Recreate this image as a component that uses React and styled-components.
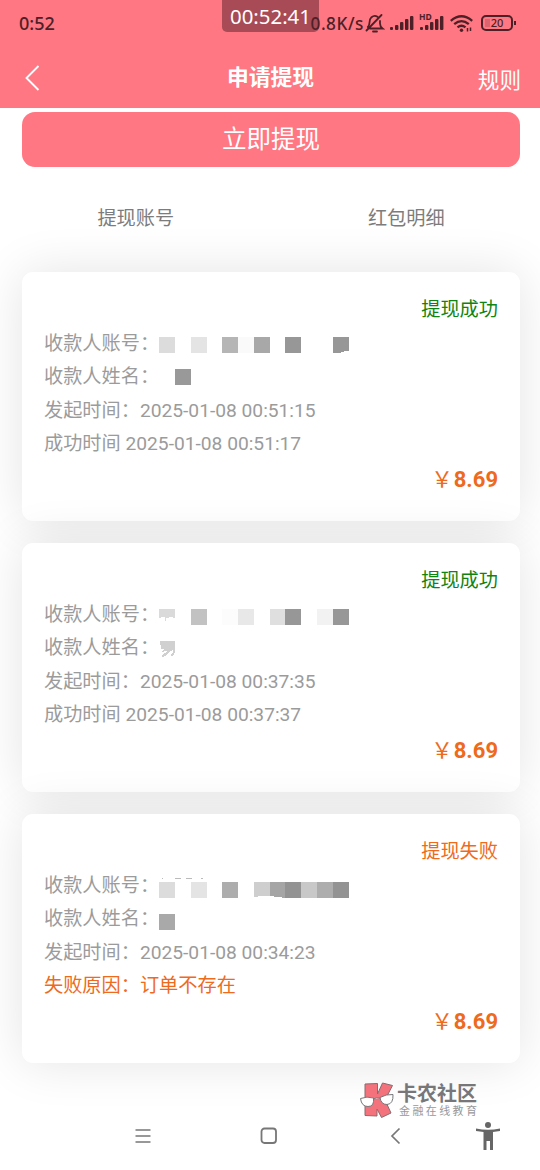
import React from 'react';
import styled, { createGlobalStyle } from 'styled-components';

const GlobalStyle = createGlobalStyle`
  :root {
    --primary-color: #ff7782;
    --status-color: #4d2027;
    --text-color: #9b9b9b;
    --success-color: #108410;
    --warn-color: #ee6a1c;
  }
  * {
    box-sizing: border-box;
  }
  body {
    margin: 0;
    background: #fff;
    font-family: Roboto, "Noto Sans CJK SC", sans-serif;
  }
`

const Page = styled.div`
  position: relative;
  display: flex;
  flex-direction: column;
  width: 540px;
  height: 1170px;
  overflow: hidden;
  background: #fff;
`

const Header = styled.header`
  position: relative;
  z-index: 1;
  flex: none;
  height: 108px;
  background: var(--primary-color);
`

const StatusBar = styled.div`
  display: flex;
  justify-content: space-between;
  align-items: center;
  height: 46px;
  padding: 0 27px 0 19px;
  color: var(--status-color);
  font-family: "Noto Sans", sans-serif;
  font-size: 18px;
  font-weight: 500;
`

const StatusIcons = styled.div`
  display: flex;
  align-items: center;
  svg {
    display: block;
  }
`

const Speed = styled.span`
  font-size: 17.2px;
  letter-spacing: 0.55px;
  margin-right: 3px;
`

const Timer = styled.div`
  position: absolute;
  top: 0;
  left: 222px;
  width: 97px;
  height: 32px;
  border-radius: 0 0 5px 5px;
  background: rgba(82, 32, 42, 0.5);
  color: #fff;
  font-family: "Noto Sans", sans-serif;
  font-size: 20.4px;
  line-height: 33px;
  text-align: center;
`

const TitleBar = styled.div`
  display: grid;
  grid-template-columns: 1fr auto 1fr;
  align-items: center;
  height: 62px;
  padding: 0 19px 0 22px;
  color: #fff;
  h1 {
    margin: 0;
    padding: 2px 2px 0 0;
    font-size: 21.8px;
    font-weight: 700;
    line-height: 30px;
  }
  svg {
    display: block;
  }
`

const Rules = styled.span`
  justify-self: end;
  font-size: 21.6px;
  line-height: 30px;
  padding-top: 7px;
`

const WithdrawButton = styled.button`
  flex: none;
  height: 55px;
  margin: 4px 20px 0 22px;
  padding: 0 0 4px;
  border: 0;
  border-radius: 13px;
  background: var(--primary-color);
  color: #fff;
  font-family: inherit;
  font-size: 24.5px;
`

const Tabs = styled.nav`
  display: grid;
  grid-template-columns: 1fr 1fr;
  flex: none;
  height: 105px;
  padding: 35px 0 0 1px;
  color: #7c7c7c;
  font-size: 19.2px;
  line-height: 33.6px;
  text-align: center;
  span:last-child {
    padding-left: 2px;
  }
`

const List = styled.main`
  display: flex;
  flex-direction: column;
  gap: 22px;
  padding: 0 20px 0 22px;
`

const Card = styled.section`
  height: 249px;
  padding: 21px 22px 0;
  border-radius: 11px;
  background: #fff;
  box-shadow: 0 0 50px rgba(0, 0, 0, 0.11);
  color: var(--text-color);
  font-size: 19.2px;
  line-height: 33.6px;
`

const Status = styled.div`
  color: ${p => p.$failed ? 'var(--warn-color)' : 'var(--success-color)'};
  text-align: right;
`

const Line = styled.div`
  display: flex;
  height: 33.5px;
  white-space: pre;
  color: ${p => p.$failed ? 'var(--warn-color)' : 'inherit'};
  svg {
    flex: none;
    overflow: visible;
  }
`

const Price = styled.div`
  color: var(--warn-color);
  font-size: 22px;
  line-height: 38.5px;
  text-align: right;
  span {
    font-size: 21.6px;
    margin-right: 1px;
  }
`

const NavBar = styled.footer`
  display: flex;
  align-items: center;
  flex: none;
  height: 68px;
  margin-top: auto;
  padding: 0 39px 0 134px;
  svg {
    display: block;
  }
  svg:nth-child(2) {
    margin-left: 108px;
  }
  svg:nth-child(3) {
    margin-left: 112px;
  }
  svg:last-child {
    margin-left: auto;
  }
`

const Watermark = styled.div`
  position: absolute;
  left: 359px;
  top: 1081px;
  display: flex;
  gap: 2px;
  color: #77777a;
  svg {
    display: block;
  }
  strong {
    display: block;
    font-size: 20px;
    font-weight: 700;
    line-height: 22px;
    margin-top: 2px;
  }
  small {
    display: block;
    font-size: 11px;
    letter-spacing: 2.4px;
    line-height: 12px;
    margin-top: 1px;
    padding-left: 2px;
    color: #98989a;
    white-space: nowrap;
  }
`

const records = [
  {
    status: '提现成功',
    start: '2025-01-08 00:51:15',
    end: '成功时间 2025-01-08 00:51:17',
    accountTop: 10,
    account: [[0, '#dcdcdc'], [2, '#e4e4e4'], [4, '#b5b5b5'], [5, '#fafafa'], [6, '#a8a8a8'], [8, '#979797'], [11, '#979797', 'M0 0h16v14h-4l-5 2h-7z']],
    nameTop: 9,
    name: [[1, '#999']],
  },
  {
    status: '提现成功',
    start: '2025-01-08 00:37:35',
    end: '成功时间 2025-01-08 00:37:37',
    accountTop: 11,
    account: [[0, '#dadada', 'M0 0h16v9l-4-1-4 1-4-1-4 1zM6 9h1v3h-1z'], [2, '#c2c2c2'], [4, '#fcfcfc'], [5, '#e8e8e8'], [7, '#dfdfdf'], [8, '#979797'], [10, '#f2f2f2'], [11, '#979797']],
    nameTop: 10,
    name: [[0, '#d0d0d0', 'M1 0h15v11l-1 3-3 1v-2l2-1v-3l-3 1-3 4-4 2-2-1 4-3 2-2-6 1 3-3h-3z']],
  },
  {
    status: '提现失败',
    start: '2025-01-08 00:34:23',
    end: '失败原因：订单不存在',
    failed: true,
    accountTop: 13,
    account: [[0, '#dcdcdc'], [0, '#bbb', 'M2-3q4-2 6 0l-2-1zM16-3h6v-1h-6zM27-3h6v-1h-6zM40-3l4-1v1z'], [2, '#e4e4e4'], [4, '#adadad'], [6, '#cecece', 'M0 0h16v14h-8l-8 1z'], [7, '#a5a5a5', 'M0 0h16v16l-8-1-8-1z'], [8, '#939393'], [9, '#c8c8c8'], [10, '#adadad'], [11, '#939393']],
    nameTop: 12,
    name: [[0, '#a9a9a9']],
  },
]

// cells are laid out on a 16px grid, an optional path replaces the full square
function Mosaic({ cells, top }) {
  return (
    <svg width="192" height="33" aria-hidden="true" shapeRendering="crispEdges">
      {cells.map(([col, fill, d], i) => (
        <path key={i} fill={fill} transform={`translate(${Math.round(col * 15.8)} ${top})`} d={d || 'M0 0h16v16h-16z'} />
      ))}
    </svg>
  )
}

function Signal() {
  return (
    <svg width="24" height="16" viewBox="0 0 24 16" fill="currentColor">
      <rect x="0" y="12" width="3" height="3" rx="1" />
      <rect x="5" y="10" width="3.4" height="5" rx="1" />
      <rect x="10" y="7" width="3.4" height="8" rx="1" />
      <rect x="15" y="4" width="3.4" height="11" rx="1" />
      <rect x="20" y="1" width="3.4" height="14" rx="1" />
    </svg>
  )
}

const Hd = styled.div`
  position: relative;
  margin: 0 6px 0 6px;
  span {
    position: absolute;
    left: -1px;
    top: -3px;
    font-size: 8.5px;
    font-weight: 700;
    line-height: 10px;
  }
`

const Battery = styled.div`
  position: relative;
  width: 32px;
  height: 16px;
  margin-left: 7px;
  border: 2px solid currentColor;
  border-radius: 5px;
  font-size: 11px;
  line-height: 12px;
  text-align: center;
  &::before {
    content: "";
    position: absolute;
    left: 2px;
    top: 2px;
    width: 5px;
    height: 8px;
    background: rgba(77, 32, 39, 0.2);
  }
  &::after {
    content: "";
    position: absolute;
    right: -5px;
    top: 4px;
    width: 2px;
    height: 4px;
    background: currentColor;
  }
`

const BellOff = styled.svg`
  margin: 0 5px 0 -2px;
`

export default function App() {
  return (
    <>
      <GlobalStyle />
      <Page>
        <Header>
          <StatusBar>
            <span>0:52</span>
            <StatusIcons>
              <Speed>0.8K/s</Speed>
              <BellOff width="20" height="20" viewBox="0 0 20 20" fill="none" stroke="currentColor" strokeWidth="1.8" strokeLinecap="round">
                <path d="M5 15.500h12.500q-2.500-2-2.500-5V8M12.500 3.800Q9.500 1.800 6.500 4.200Q4.500 6 4.500 9.500Q4.500 12 2.800 14M1.500 17.500L16.500 2M8 18.500h4" />
              </BellOff>
              <Signal />
              <Hd><span>HD</span><Signal /></Hd>
              <svg width="24" height="19" viewBox="0 0 24 19" fill="none" stroke="currentColor" strokeWidth="2.3">
                <path d="M.8 6.800Q11.500-2.200 22.200 6.800M4.200 10.200Q11.500 4 18.800 10.200M7.500 13.400Q11.500 10 15.500 13.400" />
                <circle cx="11.5" cy="16.2" r="1.7" fill="currentColor" stroke="none" />
                <path d="M17.500 14v3.500M20.500 13.500v3.500" strokeWidth="1.5" />
              </svg>
              <Battery>20</Battery>
            </StatusIcons>
          </StatusBar>
          <TitleBar>
            <svg width="20" height="28" viewBox="0 0 20 28" fill="none" stroke="currentColor" strokeWidth="1.9">
              <path d="M16.500 3L4.500 15L16.500 27" />
            </svg>
            <h1>申请提现</h1>
            <Rules>规则</Rules>
          </TitleBar>
          <Timer>00:52:41</Timer>
        </Header>

        <WithdrawButton>立即提现</WithdrawButton>
        <Tabs>
          <span>提现账号</span>
          <span>红包明细</span>
        </Tabs>

        <List>
          {records.map(r => (
            <Card key={r.start}>
              <Status $failed={r.failed}>{r.status}</Status>
              <Line>收款人账号：<Mosaic cells={r.account} top={r.accountTop} /></Line>
              <Line>收款人姓名：<Mosaic cells={r.name} top={r.nameTop} /></Line>
              <Line>发起时间：{r.start}</Line>
              <Line $failed={r.failed}>{r.end}</Line>
              <Price><span>￥</span><b>8.69</b></Price>
            </Card>
          ))}
        </List>

        <NavBar>
          <svg width="18" height="16" viewBox="0 0 18 16" stroke="#777" strokeWidth="1.7">
            <path d="M1.500 2h15M1.500 8h15M1.500 14h15" />
          </svg>
          <svg width="18" height="18" viewBox="0 0 18 18" fill="none" stroke="#777" strokeWidth="1.8">
            <rect x="1.5" y="1.5" width="14.5" height="14.5" rx="3" />
          </svg>
          <svg width="12" height="18" viewBox="0 0 12 18" fill="none" stroke="#777" strokeWidth="1.7">
            <path d="M9.500 1.500L2 9L9.500 16.500" />
          </svg>
          <svg width="26" height="30" viewBox="0 0 26 30" fill="#666">
            <circle cx="13" cy="4" r="3" />
            <path d="M1 7.500Q13 10 25 7.500V10L18 11V29H15V20H11.500V29H8.500V11L1 10Z" />
          </svg>
        </NavBar>

        <Watermark>
          <svg width="36" height="38" viewBox="0 0 36 38">
            <g fill="#f4727c" stroke="#8a6a6e" strokeWidth="1">
              <path d="M6 3L18.500 2.500V13L23.500 2L33.500 4.500L26 19L32 32L22.500 36.500L18 28V35L6 34.500V19Z" />
            </g>
            <g fill="#fff" stroke="#77777a" strokeWidth="1">
              <path d="M1.500 17.500Q8 15 14.500 17Q15.500 25.500 9 25.500Q2.500 25.500 1.500 17.500ZM21 16.500Q27 13 34 13.500Q34.500 23 28 23.500Q22 23.500 21 16.500ZM14.500 18Q17.500 16 21 17" />
            </g>
          </svg>
          <div>
            <strong>卡农社区</strong>
            <small>金融在线教育</small>
          </div>
        </Watermark>
      </Page>
    </>
  )
}
